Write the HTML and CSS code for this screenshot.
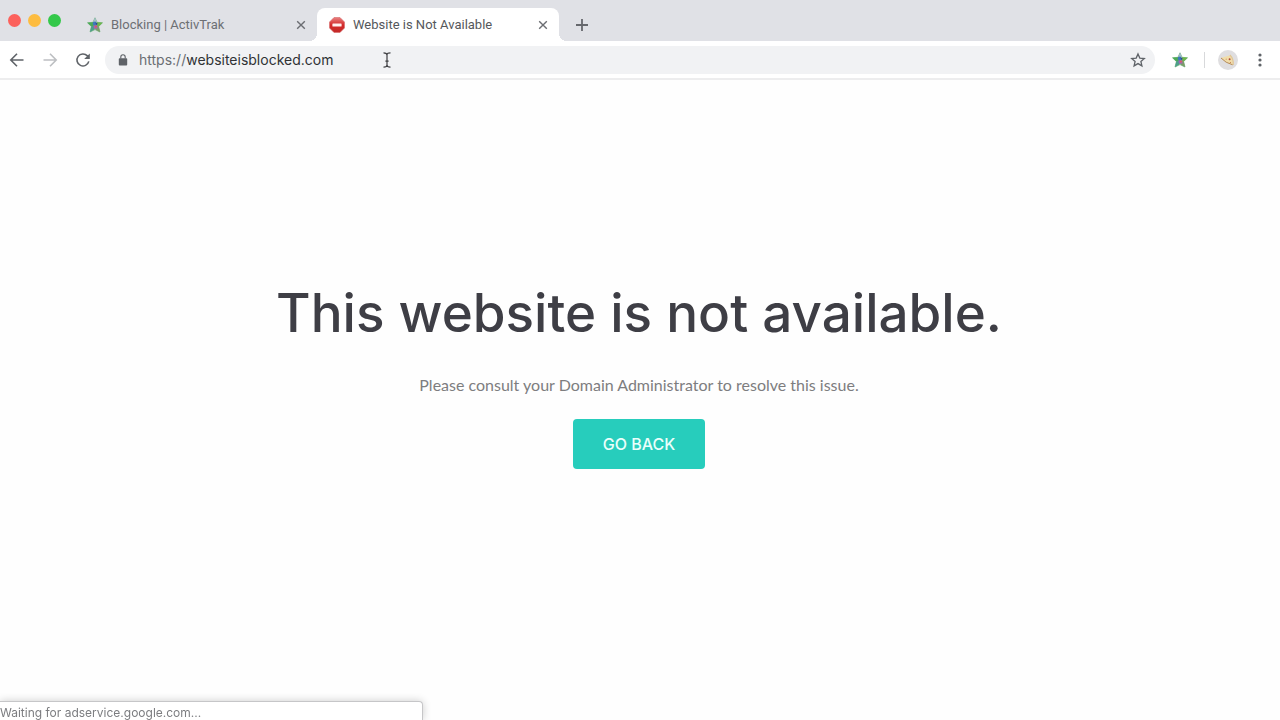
FILE: index.html
```html
<!DOCTYPE html>
<html lang="en">
<head>
  <meta charset="UTF-8" />
  <meta name="viewport" content="width=device-width, initial-scale=1.0"/>
  <title>Website is Not Available</title>
  <link rel="stylesheet" href="styles.css">
</head>
<body>

<svg width="0" height="0" class="defs" aria-hidden="true">
  <symbol id="star-logo" viewBox="0 0 16 16">
    <path d="M8 0.8 L10 5.3 L15.5 5.8 L11.6 9.5 L13 15 L8 12.6 L3 15 L4.4 9.5 L0.5 5.8 L6 5.3Z" fill="#5faa70" stroke="#7fb98a" stroke-width="0.8"/>
    <path d="M8 0.5 L10 5.3 L8 8 L6 5.3Z" fill="#a3bfc9"/>
    <path d="M0.5 5.8 L6 5.3 L8 8 L4.4 9.5Z" fill="#4cab56"/>
    <path d="M15.5 5.8 L10 5.3 L8 8 L11.6 9.5Z" fill="#6fb64a"/>
    <path d="M3 15 L4.4 9.5 L7 8.6 L7 12.6Z" fill="#4d9e8c"/>
    <path d="M13 15 L11.6 9.5 L9.4 8.6 L9.4 13Z" fill="#7f9a68"/>
    <path d="M6 5 L8.4 4.6 L10.6 7 L8 9 L5.8 7.6Z" fill="#3f78bd"/>
    <path d="M8.2 5.6 L10.6 6.4 L9.6 8Z" fill="#2f3f86"/>
    <path d="M6.4 8.6 L10.2 8.2 L10.4 11.6 L7 11.8Z" fill="#a862b8"/>
    <path d="M8 8.4 L10.2 9.2 L8.6 11Z" fill="#ea5a4e"/>
  </symbol>
  <symbol id="cross" viewBox="0 0 10 10">
    <path d="M1.2 1.2 L8.8 8.8 M8.8 1.2 L1.2 8.8" fill="none" stroke="#6b6d72" stroke-width="1.4"/>
  </symbol>
</svg>

<header class="browser">
  <div class="tab-strip">
    <div class="lights">
      <button class="light red" aria-label="Close window"></button>
      <button class="light yellow" aria-label="Minimize"></button>
      <button class="light green" aria-label="Zoom"></button>
    </div>
    <div class="tab">
      <svg class="favicon" width="16" height="16"><use href="#star-logo"/></svg>
      <span class="tab-title">Blocking | ActivTrak</span>
      <button class="icon-btn close" aria-label="Close tab"><svg width="10" height="10"><use href="#cross"/></svg></button>
    </div>
    <div class="tab active">
      <svg class="favicon" width="16" height="16" viewBox="0 0 16 16">
        <defs>
          <linearGradient id="stop" x1="0" y1="0" x2="0" y2="1">
            <stop offset="0" stop-color="#e88080"/>
            <stop offset="0.5" stop-color="#d42a2a"/>
            <stop offset="1" stop-color="#c22a28"/>
          </linearGradient>
        </defs>
        <path d="M5 0.5 H11 L15.5 5 V11 L11 15.5 H5 L0.5 11 V5Z" fill="url(#stop)" stroke="#d66a6a" stroke-width="0.6" stroke-linejoin="round"/>
        <rect x="3.4" y="6.4" width="9.2" height="3.2" rx="0.6" fill="#fff0f0"/>
      </svg>
      <span class="tab-title">Website is Not Available</span>
      <button class="icon-btn close" aria-label="Close tab"><svg width="10" height="10"><use href="#cross"/></svg></button>
    </div>
    <button class="icon-btn new-tab" aria-label="New tab">
      <svg width="12" height="12" viewBox="0 0 12 12"><path d="M6 0 V12 M0 6 H12" stroke="#66686d" stroke-width="1.8"/></svg>
    </button>
  </div>

  <div class="toolbar">
    <button class="icon-btn" aria-label="Back">
      <svg width="16" height="16" viewBox="0 0 16 16"><path d="M14.5 8 H2 M8 1.8 L1.8 8 L8 14.2" fill="none" stroke="#5f6368" stroke-width="1.6"/></svg>
    </button>
    <button class="icon-btn" aria-label="Forward" disabled>
      <svg width="16" height="16" viewBox="0 0 16 16"><path d="M1.5 8 H14 M8 1.8 L14.2 8 L8 14.2" fill="none" stroke="#bdbfc2" stroke-width="1.6"/></svg>
    </button>
    <button class="icon-btn" aria-label="Reload">
      <svg width="16" height="16" viewBox="0 0 16 16"><path d="M13.8 9.4 A6 6 0 1 1 12.4 3.9 L13.6 5.2" fill="none" stroke="#5f6368" stroke-width="1.6"/><path d="M14.8 1.4 V7 H9.2Z" fill="#5f6368"/></svg>
    </button>
    <div class="address">
      <svg class="lock" width="10" height="12" viewBox="0 0 10 12"><rect x="0.8" y="4.2" width="8.4" height="7.3" rx="0.9" fill="#5f6368"/><path d="M2.8 4.6 V3 A2.2 2.2 0 0 1 7.2 3 V4.6" fill="none" stroke="#5f6368" stroke-width="1.1"/></svg>
      <label class="scheme" for="url">https://</label>
      <input type="text" id="url" value="websiteisblocked.com" />
      <button class="icon-btn bookmark" aria-label="Bookmark this page">
        <svg width="16" height="16" viewBox="0 0 16 16"><path d="M8 1.9 L9.8 6.1 L14.3 6.5 L10.9 9.5 L11.9 13.9 L8 11.6 L4.1 13.9 L5.1 9.5 L1.7 6.5 L6.2 6.1Z" fill="none" stroke="#5f6368" stroke-width="1.3"/></svg>
      </button>
      <svg class="text-cursor" width="8" height="16" viewBox="0 0 8 16" aria-hidden="true"><path d="M0.5 0.8 Q4 0.8 4 3 Q4 0.8 7.5 0.8 M4 2.5 V13.5 M0.5 15.2 Q4 15.2 4 13 Q4 15.2 7.5 15.2 M2.4 9.2 H5.6" fill="none" stroke="#3c3d40" stroke-width="1.2"/></svg>
    </div>
    <button class="icon-btn extension" aria-label="ActivTrak"><svg width="16" height="16"><use href="#star-logo"/></svg></button>
    <span class="divider"></span>
    <button class="icon-btn avatar" aria-label="Profile">
      <svg width="20" height="20" viewBox="0 0 20 20">
        <circle cx="10" cy="10" r="10" fill="#dfdee0"/>
        <path d="M3 8 L12 5.2 Q15.4 9.2 14.8 14.8 Q8 13.2 3 8Z" fill="#f1ddaa"/>
        <path d="M12 5 Q15.8 9 15.2 15" fill="none" stroke="#e0c594" stroke-width="1.2"/>
        <path d="M3 8 Q7.5 13 14.6 14.8" fill="none" stroke="#b58b58" stroke-width="1"/>
        <circle cx="11.6" cy="9.2" r="1" fill="#b24b3a"/>
        <circle cx="8.2" cy="9.2" r="0.6" fill="#cf9a6c"/>
        <circle cx="12.4" cy="12.5" r="0.6" fill="#c4774c"/>
      </svg>
    </button>
    <button class="icon-btn menu" aria-label="Menu">
      <svg width="4" height="14" viewBox="0 0 4 14" fill="#5f6368"><circle cx="2" cy="2" r="1.6"/><circle cx="2" cy="7" r="1.6"/><circle cx="2" cy="12" r="1.6"/></svg>
    </button>
  </div>
</header>

<main class="blocked">
  <h1>This website is not available.</h1>
  <p>Please consult your Domain Administrator to resolve this issue.</p>
  <button class="go-back" onclick="history.back()">GO BACK</button>
</main>

<div class="status">Waiting for adservice.google.com...</div>

</body>
</html>
```
FILE: styles.css
```css
* { margin: 0; padding: 0; box-sizing: border-box; }

body {
  min-height: 100vh;
  display: flex;
  flex-direction: column;
  background: #fefefe;
  font-family: Roboto, "Liberation Sans", sans-serif;
  overflow: hidden;
}

.defs { position: absolute; }

button {
  border: none;
  background: none;
  cursor: pointer;
}

.icon-btn {
  display: flex;
  flex: none;
  align-items: center;
  justify-content: center;
}

/* tabs */
.tab-strip {
  display: flex;
  align-items: flex-end;
  height: 41px;
  background: #e0e1e6;
}

.lights {
  display: flex;
  gap: 7px;
  align-self: center;
  padding-left: 8px;
  width: 75px;
}

.light {
  width: 13px;
  height: 13px;
  border-radius: 50%;
}
.red { background: #fc615c; }
.yellow { background: #fdbc40; }
.green { background: #34c84a; }

.tab {
  position: relative;
  display: flex;
  align-items: center;
  width: 242px;
  height: 33px;
  padding: 0 11px 0 12px;
  color: #6d6f74;
  font-size: 13px;
}

.tab.active {
  background: #fff;
  border-radius: 8px 8px 0 0;
  color: #55575b;
}

/* curved feet of the active tab */
.tab.active::before,
.tab.active::after {
  content: "";
  position: absolute;
  bottom: 0;
  width: 8px;
  height: 8px;
}
.tab.active::before {
  right: 100%;
  background: radial-gradient(circle at 0 0, transparent 8px, #fff 8px);
}
.tab.active::after {
  left: 100%;
  background: radial-gradient(circle at 100% 0, transparent 8px, #fff 8px);
}

.favicon { flex: none; margin-right: 8px; }
.tab-title { flex: 1; white-space: nowrap; }
.new-tab { width: 46px; height: 33px; }

/* toolbar */
.toolbar {
  display: flex;
  align-items: center;
  height: 39px;
  padding: 0 14px 0 9px;
  background: #fff;
  border-bottom: 2px solid #ededee;
}

.toolbar > .icon-btn + .icon-btn { margin-left: 17px; }

.address {
  position: relative;
  flex: 1;
  display: flex;
  align-items: center;
  height: 28px;
  margin-left: 14px;
  padding: 0 9px 0 13px;
  border-radius: 14px;
  background: #f1f2f4;
  font-family: Inter, sans-serif;
  font-size: 14px;
}

.lock { margin-right: 11px; }
.scheme { color: #6b6e73; }

.address input {
  flex: 1;
  min-width: 0;
  border: none;
  outline: none;
  background: none;
  color: #303235;
  font: inherit;
}

.text-cursor {
  position: absolute;
  left: 278px;
  top: 6px;
}

.extension { margin-left: 17px; }

.divider {
  width: 1px;
  height: 16px;
  margin: 0 13px 0 16px;
  background: #d8d9db;
}

.menu { width: 12px; }

.toolbar > .menu.icon-btn { margin-left: 16px; }

/* page */
.blocked {
  flex: 1;
  display: flex;
  flex-direction: column;
  align-items: center;
  justify-content: center;
  padding: 0 2px 50px 0;
  text-align: center;
}

.blocked h1 {
  margin-bottom: 26px;
  color: #3e3e45;
  font-family: Inter, sans-serif;
  font-size: 53px;
  font-weight: 500;
  line-height: 64px;
}

.blocked p {
  margin-bottom: 20px;
  color: #7d7d7f;
  font-family: Lato, sans-serif;
  font-size: 16px;
  line-height: 28px;
}

.go-back {
  height: 50px;
  padding: 0 30px;
  border-radius: 4px;
  background: #27cdbc;
  color: #eafffb;
  font-family: Inter, sans-serif;
  font-size: 16px;
  font-weight: 500;
}

.status {
  position: fixed;
  left: 0;
  bottom: 0;
  width: 423px;
  height: 19px;
  border: 1px solid #c6c6c8;
  border-width: 1px 1px 0 0;
  border-radius: 0 4px 0 0;
  background: #fff;
  box-shadow: 0 0 8px rgba(0,0,0,0.2);
  color: #7c7d80;
  font-family: Inter, sans-serif;
  font-size: 12px;
  line-height: 22px;
}
```
